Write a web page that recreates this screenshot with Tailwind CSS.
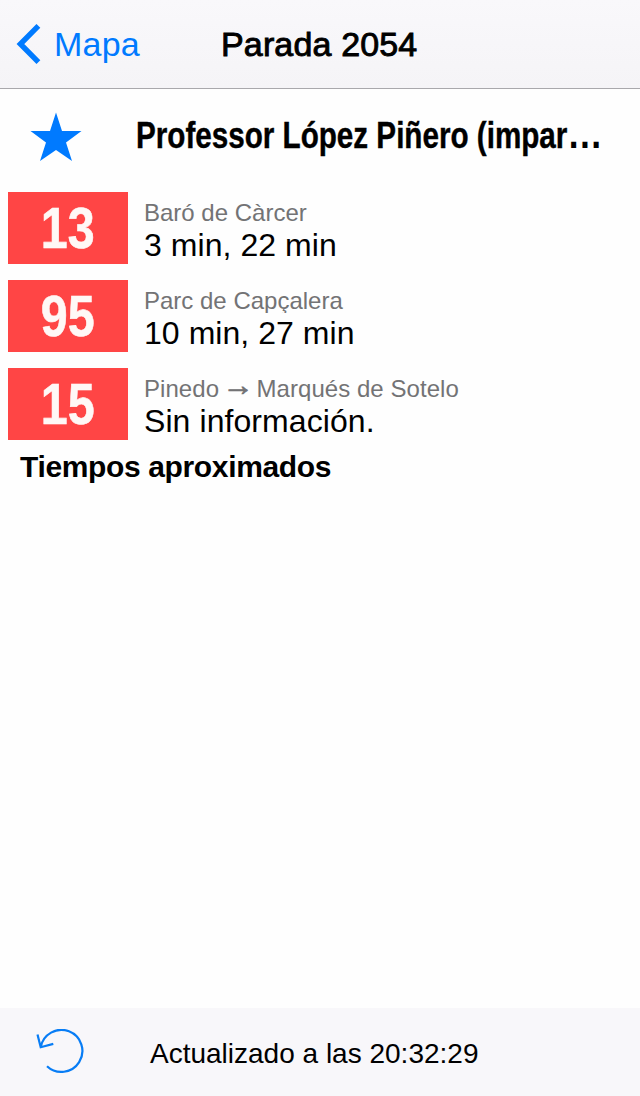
<!DOCTYPE html>
<html lang="es">
<head>
<meta charset="utf-8">
<title>Parada 2054</title>
<script src="https://cdn.jsdelivr.net/npm/@tailwindcss/browser@4"></script>
</head>
<body class="bg-[#fefefe] font-['Liberation_Sans',Arial,sans-serif] text-black">
<div class="flex h-[1096px] w-[640px] flex-col overflow-hidden">
  <header class="grid h-[89px] shrink-0 grid-cols-[221px_1fr] items-center border-b border-[#a9a8ac] bg-linear-to-b from-[#f9f8fb] to-[#f5f4f7] text-[34px] leading-[88px]">
    <a class="flex items-center text-[#007aff]">
      <svg class="ml-4 h-[42px] w-[26px]" viewBox="0 0 26 42" fill="none" stroke="currentColor" stroke-width="5.4"><path d="M22.4 2.9 4.4 21l18 18.1"/></svg>
      <span class="ml-3 tracking-[0.2px]">Mapa</span>
    </a>
    <h1 class="tracking-[0.15px] [-webkit-text-stroke:0.9px_black]">Parada 2054</h1>
  </header>
  <main class="flex-1">
    <div class="flex h-[95px] items-center">
      <svg class="ml-[30px] h-[50px] w-[52px] shrink-0 text-[#007aff]" viewBox="0 0 52 50" fill="currentColor"><path d="M26 0.5 32 19H51.5L36 30.5 42 49 26 38 10 49 16 30.5 0.5 19H20Z"/></svg>
      <h2 class="mb-[6px] ml-[54px] w-[500px] shrink-0 origin-left scale-x-[0.823] text-[36px] leading-10 font-bold whitespace-nowrap [-webkit-text-stroke:0.4px_black]">Professor López Piñero (impar<span class="text-[43px] leading-none [-webkit-text-stroke:0]">…</span></h2>
    </div>
    <ul class="flex flex-col gap-4 pt-2 pl-2">
      <li class="flex h-[72px] gap-4">
        <div class="w-[120px] bg-[#ff4545] text-center"><span class="inline-block scale-x-[0.85] text-[57px] leading-[72px] font-bold text-[#fff8f6] [-webkit-text-stroke:0.6px_#fff8f6]">13</span></div>
        <div class="flex flex-col pt-[5px]"><span class="h-[28px] overflow-hidden text-2xl leading-8 text-[#737375]">Baró de Càrcer</span><span class="mt-1 text-[32px] leading-8 tracking-[0.05px]">3 min, 22 min</span></div>
      </li>
      <li class="flex h-[72px] gap-4">
        <div class="w-[120px] bg-[#ff4545] text-center"><span class="inline-block scale-x-[0.85] text-[57px] leading-[72px] font-bold text-[#fff8f6] [-webkit-text-stroke:0.6px_#fff8f6]">95</span></div>
        <div class="flex flex-col pt-[5px]"><span class="h-[28px] overflow-hidden text-2xl leading-8 text-[#737375]">Parc de Capçalera</span><span class="mt-1 text-[32px] leading-8 tracking-[0.05px]">10 min, 27 min</span></div>
      </li>
      <li class="flex h-[72px] gap-4">
        <div class="w-[120px] bg-[#ff4545] text-center"><span class="inline-block scale-x-[0.85] text-[57px] leading-[72px] font-bold text-[#fff8f6] [-webkit-text-stroke:0.6px_#fff8f6]">15</span></div>
        <div class="flex flex-col pt-[5px]"><span class="h-[28px] overflow-hidden text-2xl leading-8 tracking-[0.05px] text-[#737375]">Pinedo <span class="inline-block -translate-y-[4px] scale-x-[1.3] scale-y-[1.2] leading-none [-webkit-text-stroke:0.7px_#737375]">→</span> Marqués de Sotelo</span><span class="mt-1 text-[32px] leading-8 tracking-[0.08px]">Sin información.</span></div>
      </li>
    </ul>
    <p class="pl-5 text-[30px] leading-[54px] font-bold tracking-[-0.36px]">Tiempos aproximados</p>
  </main>
  <footer class="flex h-[88px] shrink-0 items-center bg-[#f8f7fa]">
    <svg class="ml-9 h-[46px] w-[50px] shrink-0 text-[#087df5]" viewBox="0 0 50 46" fill="none" stroke="currentColor" stroke-width="2.2"><path d="M11 37.2A21 21 0 1 0 4.7 18.2M1.5 5.5 4.7 18.2 17.3 14.9"/></svg>
    <span class="mt-[3px] ml-16 text-[28px] leading-10">Actualizado a las 20:32:29</span>
  </footer>
</div>
</body>
</html>
